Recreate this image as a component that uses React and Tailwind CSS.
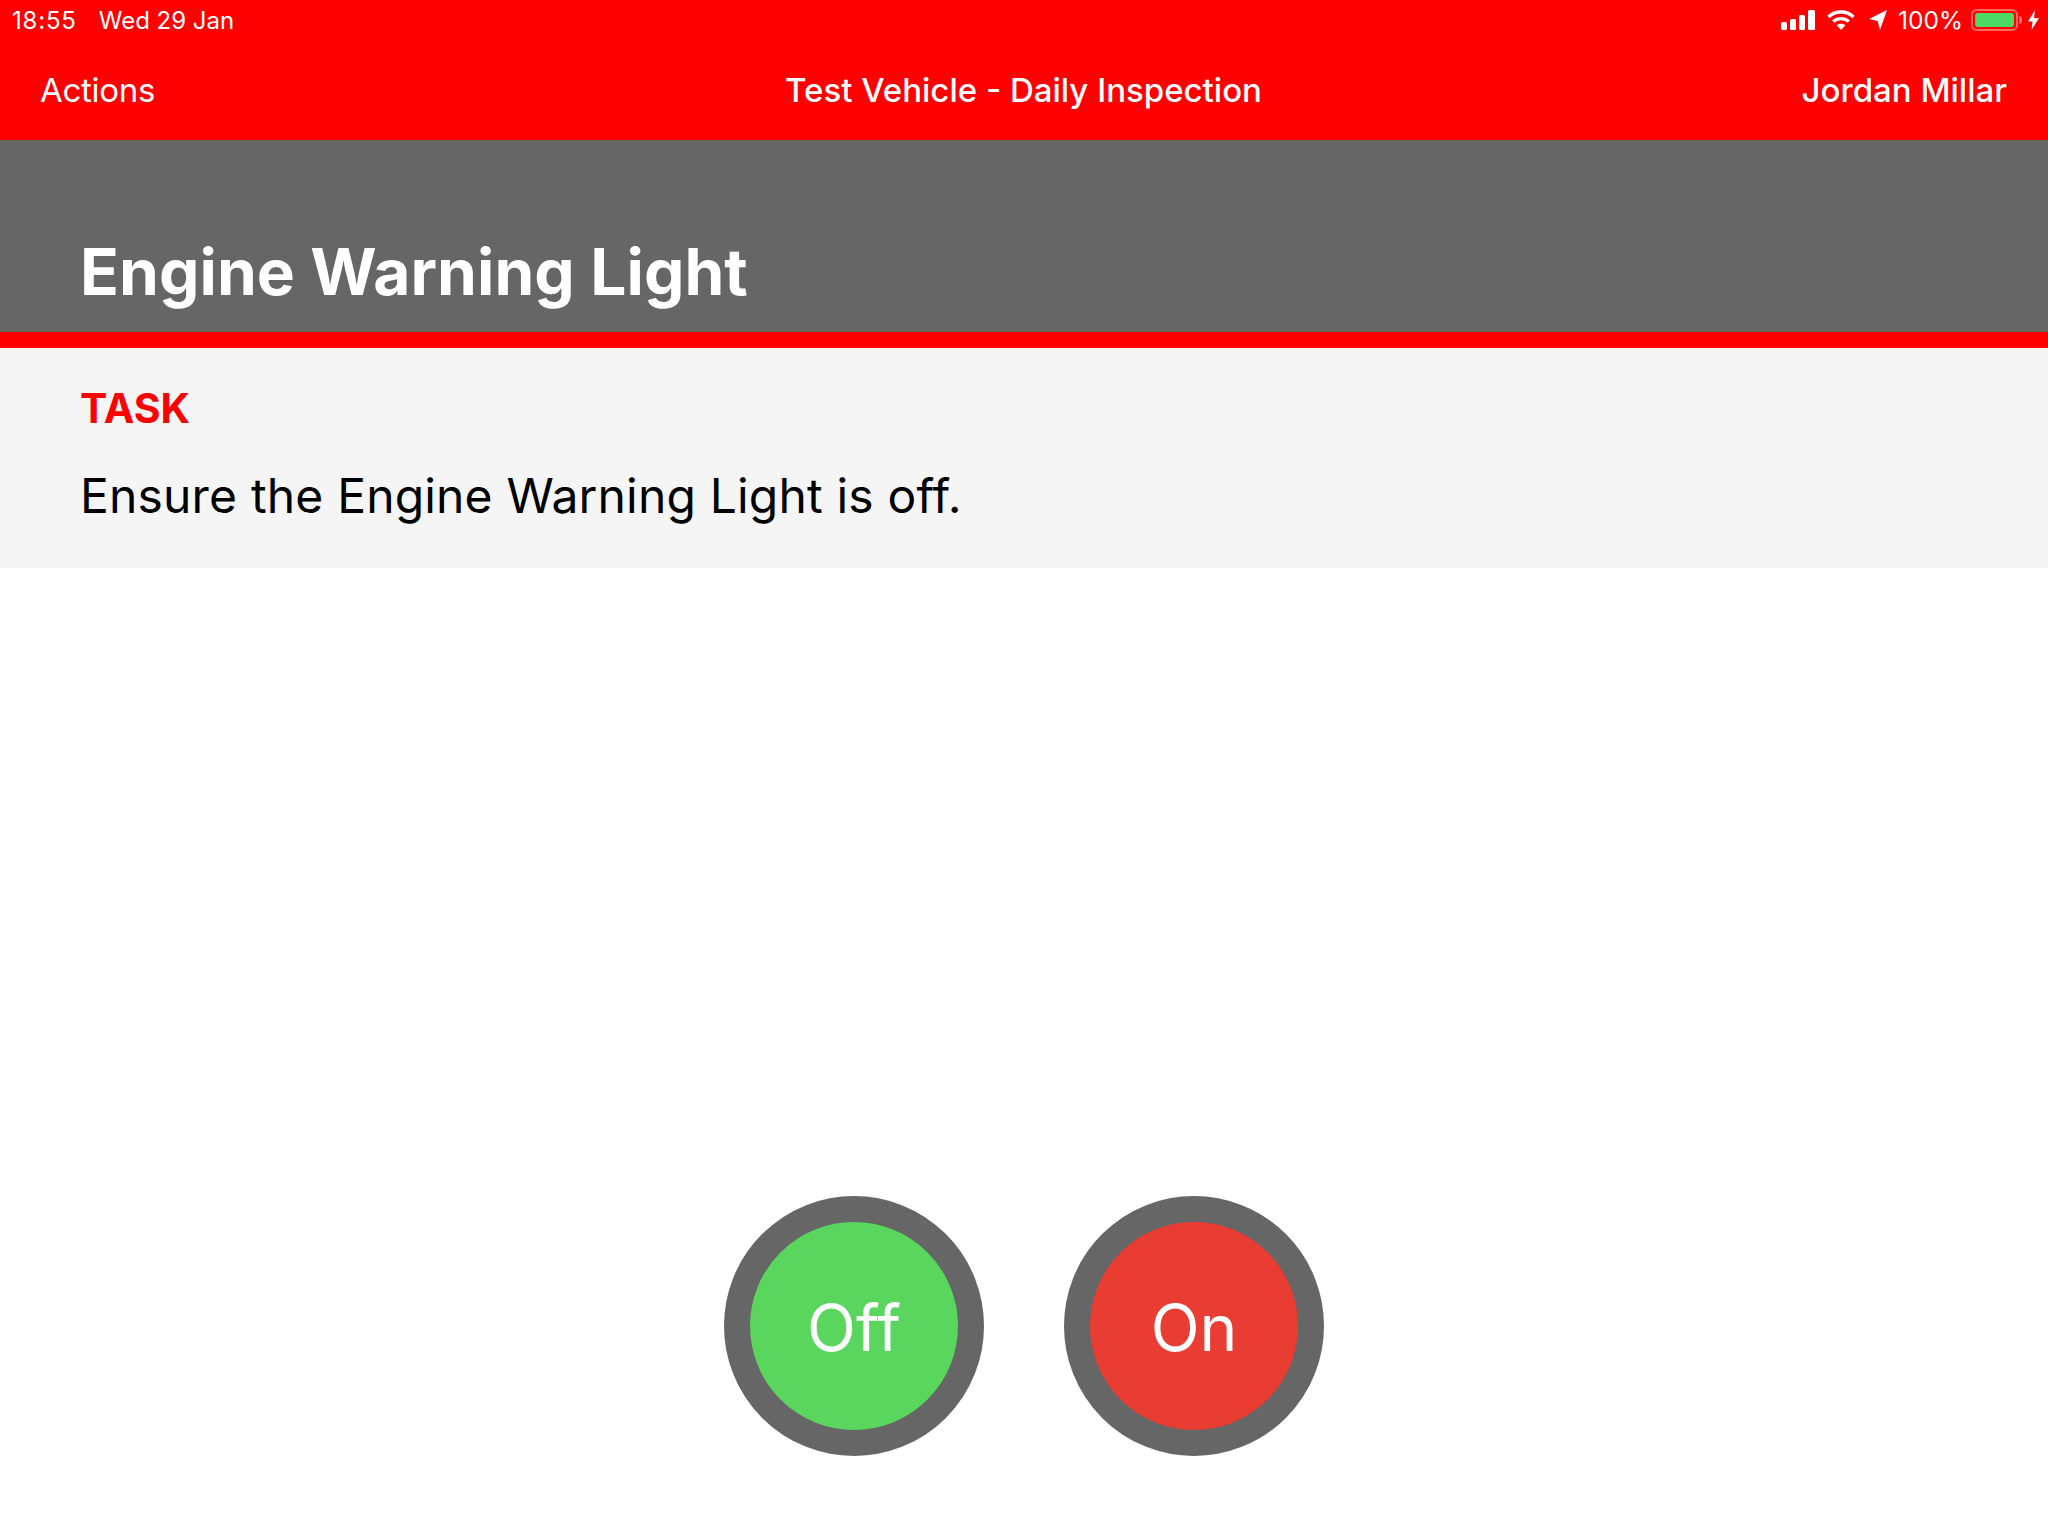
import React from 'react';

const StatusIcons = () => (
  <div className="flex items-center">
    {/* signal bars */}
    <svg width="34" height="20" viewBox="0 0 34 20" fill="#fff">
      <rect x="0" y="12" width="6" height="8" rx="1.5" />
      <rect x="9" y="9" width="6" height="11" rx="1.5" />
      <rect x="18" y="5" width="6" height="15" rx="1.5" />
      <rect x="27" y="0" width="7" height="20" rx="1.5" />
    </svg>
    {/* wifi */}
    <svg width="28" height="20" viewBox="0 0 28 20" className="ml-3" fill="none" stroke="#fff" strokeWidth="3.4">
      <path d="M1.5 7 C8.5 0.4 19.5 0.4 26.5 7" />
      <path d="M6.2 11.6 C10.5 7.6 17.5 7.6 21.8 11.6" />
      <path d="M14 20 L9.6 15.3 C12 13.3 16 13.3 18.4 15.3 Z" fill="#fff" stroke="none" />
    </svg>
    {/* location arrow */}
    <svg width="18" height="20" viewBox="0 0 18 20" className="ml-[14px]" fill="#fff">
      <path d="M18 0 L11 20 L8.6 11 L0 9 Z" />
    </svg>
    <span className="ml-[11px] pt-[1px] text-[24.5px] leading-none text-white">100%</span>
    {/* battery */}
    <div className="ml-2 flex items-center">
      <div className="flex h-[22px] w-[47px] items-center rounded-[6px] border-2 border-white/40 p-[2px]">
        <div className="h-full w-full rounded-[3px] bg-[#4cd964]" />
      </div>
      <div className="ml-[1px] h-2 w-[3px] rounded-r-sm bg-white/40" />
    </div>
    {/* charging bolt */}
    <svg width="11" height="20" viewBox="0 0 11 20" className="ml-[6px]" fill="#fff">
      <path d="M7 0 L0 11.5 H4.5 L3.5 20 L11 8 H6 Z" />
    </svg>
  </div>
);

const RoundButton = ({ label, color }) => (
  <button className="flex h-[260px] w-[260px] items-center justify-center rounded-full border-[26px] border-[#666666] pt-[3px]" style={{ backgroundColor: color }}>
    <span className="text-[64px] leading-none text-white">{label}</span>
  </button>
);

const App = () => {
  return (
    <div className="flex h-[1536px] w-full flex-col bg-white font-['Inter','Liberation_Sans',sans-serif]">
      {/* Status bar + nav */}
      <div className="h-[140px] bg-[#ff0000] text-white">
        <div className="flex h-10 items-center justify-between pl-3 pr-[9px]">
          <div className="flex gap-[22px] pt-[1px] text-[24px] leading-none">
            <span className="tracking-[0.8px]">18:55</span>
            <span>Wed 29 Jan</span>
          </div>
          <StatusIcons />
        </div>
        <div className="grid h-[100px] grid-cols-3 items-center pb-[1px] pl-[40px] pr-[41px] text-[33px] leading-[52px]">
          <span className="tracking-[-0.3px]">Actions</span>
          <span className="whitespace-nowrap text-center font-medium">Test Vehicle - Daily Inspection</span>
          <span className="text-right font-medium">Jordan Millar</span>
        </div>
      </div>

      {/* Title */}
      <div className="flex h-[192px] items-end bg-[#666666] pb-[22px] pl-[80px]">
        <h1 className="text-[64px] font-bold leading-[76px] tracking-[0.1px] text-white">Engine Warning Light</h1>
      </div>
      <div className="h-4 bg-[#ff0000]" />

      {/* Task */}
      <div className="h-[220px] bg-[#f5f5f5] pl-[80px] pt-[35px]">
        <div className="text-[41px] font-bold leading-[50px] text-[#ff0000]">TASK</div>
        <p className="mt-[31px] text-[48px] leading-[64px] tracking-[0.17px] text-black">Ensure the Engine Warning Light is off.</p>
      </div>

      {/* Answers */}
      <div className="flex flex-1 items-end justify-center gap-20 pb-20">
        <RoundButton label="Off" color="#5ad55d" />
        <RoundButton label="On" color="#e93c32" />
      </div>
    </div>
  );
};

export default App;
